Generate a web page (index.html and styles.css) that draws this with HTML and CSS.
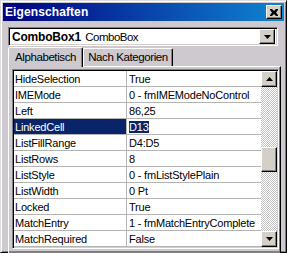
FILE: index.html
```html
<!DOCTYPE html>
<html>
  <head>
    <title>Eigenschaften</title>
    <link rel="stylesheet" href="styles.css">
  </head>
  <body>
    <div class="window">
      <div class="titlebar">
        <span class="title">Eigenschaften</span>
        <span class="btn close-btn">
          <svg width="8" height="7" viewBox="0 0 8 7"><path d="M0 0h2l2 2 2-2h2v1L6 3.5 8 6v1H6L4 5 2 7H0V6l2-2.5L0 1z" fill="#000"/></svg>
        </span>
      </div>

      <div class="content">
        <!-- object picker -->
        <div class="combo">
          <div class="combo-text"><b>ComboBox1</b> <span class="type">ComboBox</span></div>
          <span class="btn combo-btn">
            <svg width="7" height="4" viewBox="0 0 7 4"><path d="M0 0h7L3.5 4z" fill="#000"/></svg>
          </span>
        </div>

        <div class="tabs">
          <div class="tab active">Alphabetisch</div>
          <div class="tab">Nach Kategorien</div>
        </div>

        <div class="panel">
          <div class="grid">
            <div class="rows">
              <div class="row"><div class="name">HideSelection</div><div class="value">True</div></div>
              <div class="row"><div class="name">IMEMode</div><div class="value">0 - fmIMEModeNoControl</div></div>
              <div class="row"><div class="name">Left</div><div class="value">86,25</div></div>
              <div class="row selected"><div class="name">LinkedCell</div><div class="value"><span class="sel">D13</span></div></div>
              <div class="row"><div class="name">ListFillRange</div><div class="value">D4:D5</div></div>
              <div class="row"><div class="name">ListRows</div><div class="value">8</div></div>
              <div class="row"><div class="name">ListStyle</div><div class="value">0 - fmListStylePlain</div></div>
              <div class="row"><div class="name">ListWidth</div><div class="value">0 Pt</div></div>
              <div class="row"><div class="name">Locked</div><div class="value">True</div></div>
              <div class="row"><div class="name">MatchEntry</div><div class="value">1 - fmMatchEntryComplete</div></div>
              <div class="row"><div class="name">MatchRequired</div><div class="value">False</div></div>
            </div>
            <div class="scrollbar">
              <span class="btn sb-btn">
                <svg width="7" height="4" viewBox="0 0 7 4"><path d="M0 4h7L3.5 0z" fill="#000"/></svg>
              </span>
              <div class="track before"></div>
              <span class="btn thumb"></span>
              <div class="track after"></div>
              <span class="btn sb-btn">
                <svg width="7" height="4" viewBox="0 0 7 4"><path d="M0 0h7L3.5 4z" fill="#000"/></svg>
              </span>
            </div>
          </div>
        </div>
      </div>
    </div>
  </body>
</html>
```

FILE: styles.css
```css
/* Property window, Win9x look */
body {
  margin: 0;
  background-color: #cdc9cf;
  font-family: "Liberation Sans", Arial, sans-serif;
  font-size: 11px;
  color: #000;
}

.window {
  box-sizing: border-box;
  width: 287px;
  height: 253px;
  padding: 2px;
  border: 1px solid;
  border-color: #dcdcdc #000 #000 #dcdcdc;
  box-shadow: inset 1px 1px #fff, inset -1px -1px #808080;
  background-color: #cdc9cf;
  display: flex;
  flex-direction: column;
}

.titlebar {
  flex: none;
  height: 18px;
  display: flex;
  align-items: center;
  justify-content: space-between;
  padding: 0 2px;
  background: linear-gradient(90deg, #000080, #1084d0);
  color: #fff;
}

.title {
  font-weight: bold;
  font-size: 12px;
  letter-spacing: 0.1px;
}

.btn {
  box-sizing: border-box;
  display: flex;
  align-items: center;
  justify-content: center;
  background-color: #d4d0c8;
  border: 1px solid;
  border-color: #fff #000 #000 #fff;
  box-shadow: inset -1px -1px #808080;
}

.close-btn {
  width: 16px;
  height: 14px;
}

.content {
  flex: 1;
  display: flex;
  flex-direction: column;
  padding: 6px 3px 2px 5px;
}

/* object picker */
.combo {
  box-sizing: border-box;
  flex: none;
  height: 19px;
  margin-right: 3px;
  display: flex;
  align-items: center;
  background-color: #fff;
  border: 1px solid;
  border-color: #808080 #fff #fff #808080;
  box-shadow: inset 1px 1px #000, inset -1px -1px #d4d0c8;
  padding: 1px 2px;
}

.combo-text {
  flex: 1;
  font-size: 12px;
  padding-left: 1px;
}

.combo-text b {
  letter-spacing: -0.2px;
}

.type {
  font-size: 11.5px;
  letter-spacing: -0.5px;
  margin-left: 1px;
}

.combo-btn {
  width: 16px;
  height: 15px;
}

/* tabs */
.tabs {
  flex: none;
  display: flex;
  align-items: flex-end;
  height: 19px;
  margin-top: 1px;
}

.tab {
  box-sizing: border-box;
  width: 90px;
  height: 18px;
  padding-top: 2px;
  text-align: center;
  border: 1px solid;
  border-bottom: none;
  border-color: #fff #000 transparent #fff;
  box-shadow: inset -1px 0 #808080;
  border-radius: 2px 2px 0 0;
  font-size: 11.5px;
  letter-spacing: -0.4px;
}

.tab.active {
  position: relative;
  z-index: 1;
  width: 75px;
  height: 20px;
  margin-bottom: -1px;
  padding-top: 3px;
  background-color: #cdc9cf;
}

/* tab page */
.panel {
  flex: 1;
  display: flex;
  padding: 2px 1px 4px 3px;
  border: 1px solid;
  border-color: #fff #000 #000 #fff;
  box-shadow: inset -1px -1px #808080;
}

.grid {
  flex: 1;
  display: flex;
  overflow: hidden;
  border: 1px solid;
  border-color: #808080 #fff #fff #808080;
  box-shadow: inset 1px 1px #000, inset -1px -1px #d4d0c8;
  padding: 1px;
}

.rows {
  flex: 1;
  overflow: hidden;
  background-color: #fff;
}

.row {
  display: flex;
  height: 16px;
  box-sizing: border-box;
  border-bottom: 1px solid #b4b4b4;
  line-height: 16px;
  letter-spacing: -0.2px;
}

.name {
  box-sizing: border-box;
  flex: none;
  width: 113px;
  padding-left: 1px;
  border-right: 1px solid #b4b4b4;
}

.value {
  flex: 1;
  padding-left: 2px;
  white-space: nowrap;
  overflow: hidden;
}

.selected .name {
  background-color: #0a246a;
  color: #fff;
}

.sel {
  background-color: #0a246a;
  color: #fff;
}

/* scrollbar */
.scrollbar {
  flex: none;
  width: 16px;
  display: flex;
  flex-direction: column;
}

.sb-btn {
  height: 16px;
  flex: none;
}

.track {
  background-color: #fff;
  background-image: conic-gradient(#c0c0c0 25%, #fff 0 50%, #c0c0c0 0 75%, #fff 0);
  background-size: 2px 2px;
}

.track.before {
  height: 60px;
}

.track.after {
  flex: 1;
}

.thumb {
  height: 25px;
  flex: none;
}
```
